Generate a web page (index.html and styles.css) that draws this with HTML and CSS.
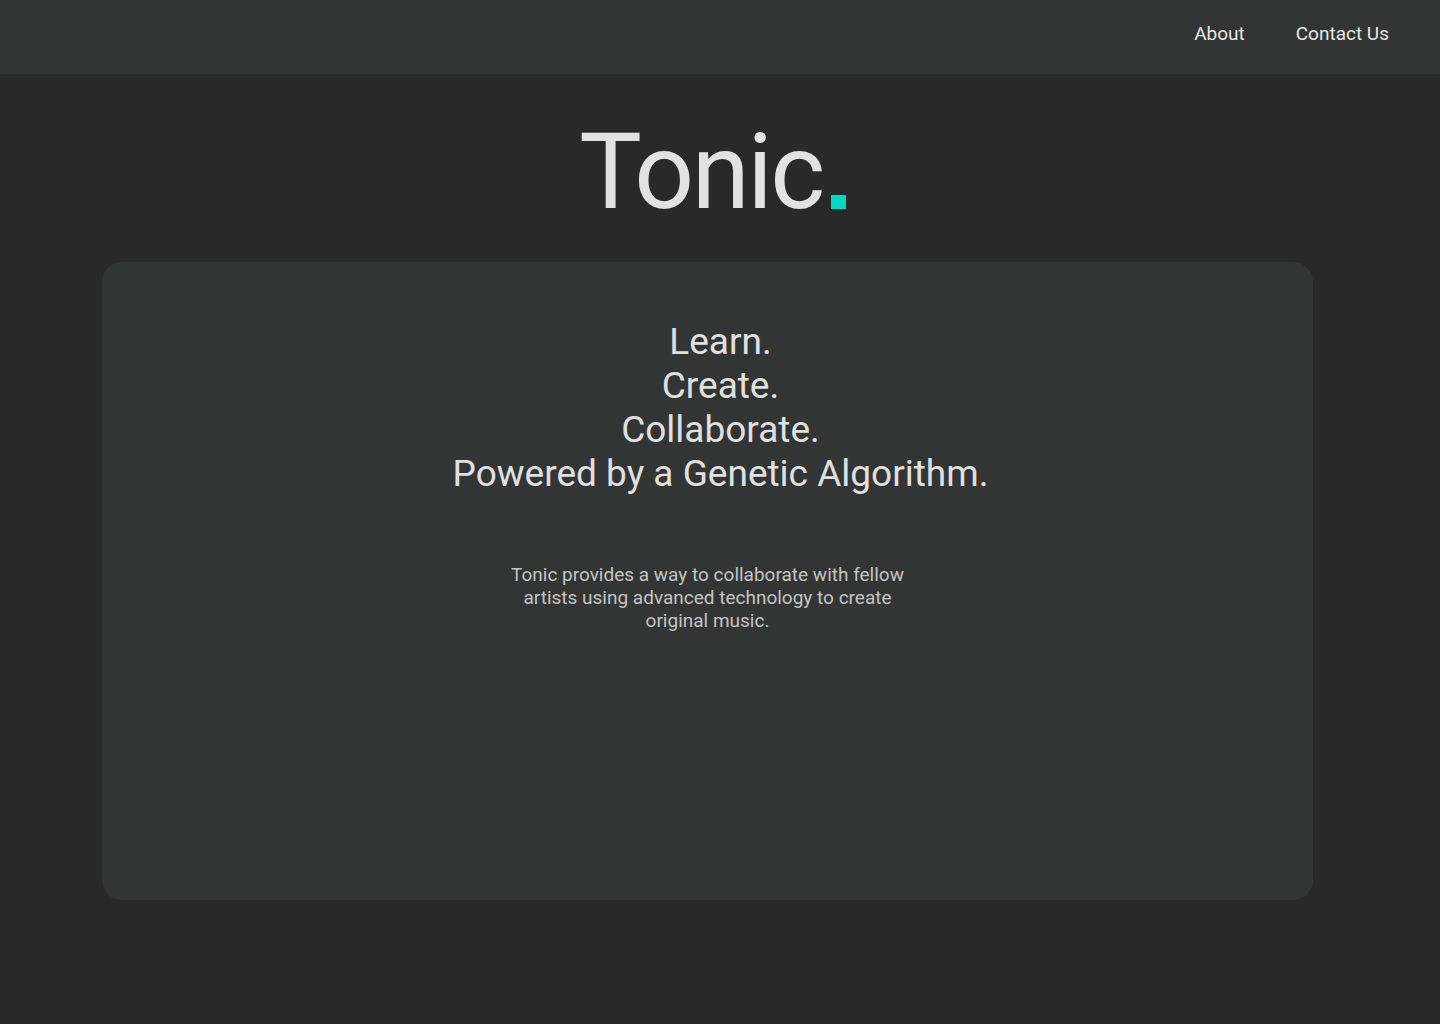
FILE: index.html
```html
<!DOCTYPE html>
<html lang="en">
<head>
<meta charset="utf-8">
<title>Tonic</title>
<link rel="stylesheet" href="styles.css">
</head>
<body>
<header class="topbar">
  <nav class="nav">
    <a class="nav-link" href="#">About</a>
    <a class="nav-link" href="#">Contact Us</a>
  </nav>
</header>
<main class="main">
  <h1 class="logo">Tonic<span class="logo-dot">.</span></h1>
  <section class="card">
    <h2 class="tagline">Learn.<br>Create.<br>Collaborate.<br>Powered by a Genetic Algorithm.</h2>
    <p class="intro">Tonic provides a way to collaborate with fellow artists using advanced technology to create original music.</p>
  </section>
</main>
</body>
</html>
```

FILE: styles.css
```css
* { box-sizing: border-box; }
html, body { margin: 0; padding: 0; }
body {
  background: #292929;
  font-family: Roboto, "Liberation Sans", Arial, sans-serif;
  color: #e0e0e0;
  min-height: 1024px;
}
.topbar {
  height: 74px;
  background: #333534;
  display: flex;
  align-items: center;
  justify-content: flex-end;
  padding: 0 51px 8px 0;
}
.nav { display: flex; gap: 51px; }
.nav-link {
  color: #e6e6e6;
  text-decoration: none;
  font-size: 19px;
}
.main {
  display: flex;
  flex-direction: column;
  align-items: center;
}
.logo {
  margin: 36px 0 0 -15px;
  font-size: 105px;
  font-weight: 400;
  line-height: 1.2;
  color: #e2e2e2;
  letter-spacing: -2.5px;
}
.logo-dot {
  display: inline-block;
  width: 15px;
  height: 14px;
  margin: 0 0 -1px 8px;
  overflow: hidden;
  background: #00d9c5;
  color: transparent;
  line-height: 14px;
  font-size: 14px;
  letter-spacing: 0;
}
.card {
  align-self: flex-start;
  margin: 26px 0 0 102px;
  width: 1211px;
  height: 638px;
  background: #333534;
  border-radius: 20px;
  display: flex;
  flex-direction: column;
  align-items: center;
  padding: 58px 0 0 26px;
}
.tagline {
  margin: 0;
  text-align: center;
  font-size: 37px;
  font-weight: 400;
  line-height: 44px;
  color: #e0e0e0;
}
.intro {
  margin: 67px 0 0 -26px;
  width: 420px;
  text-align: center;
  font-size: 19px;
  line-height: 23px;
  color: #c4c4c4;
}
```
